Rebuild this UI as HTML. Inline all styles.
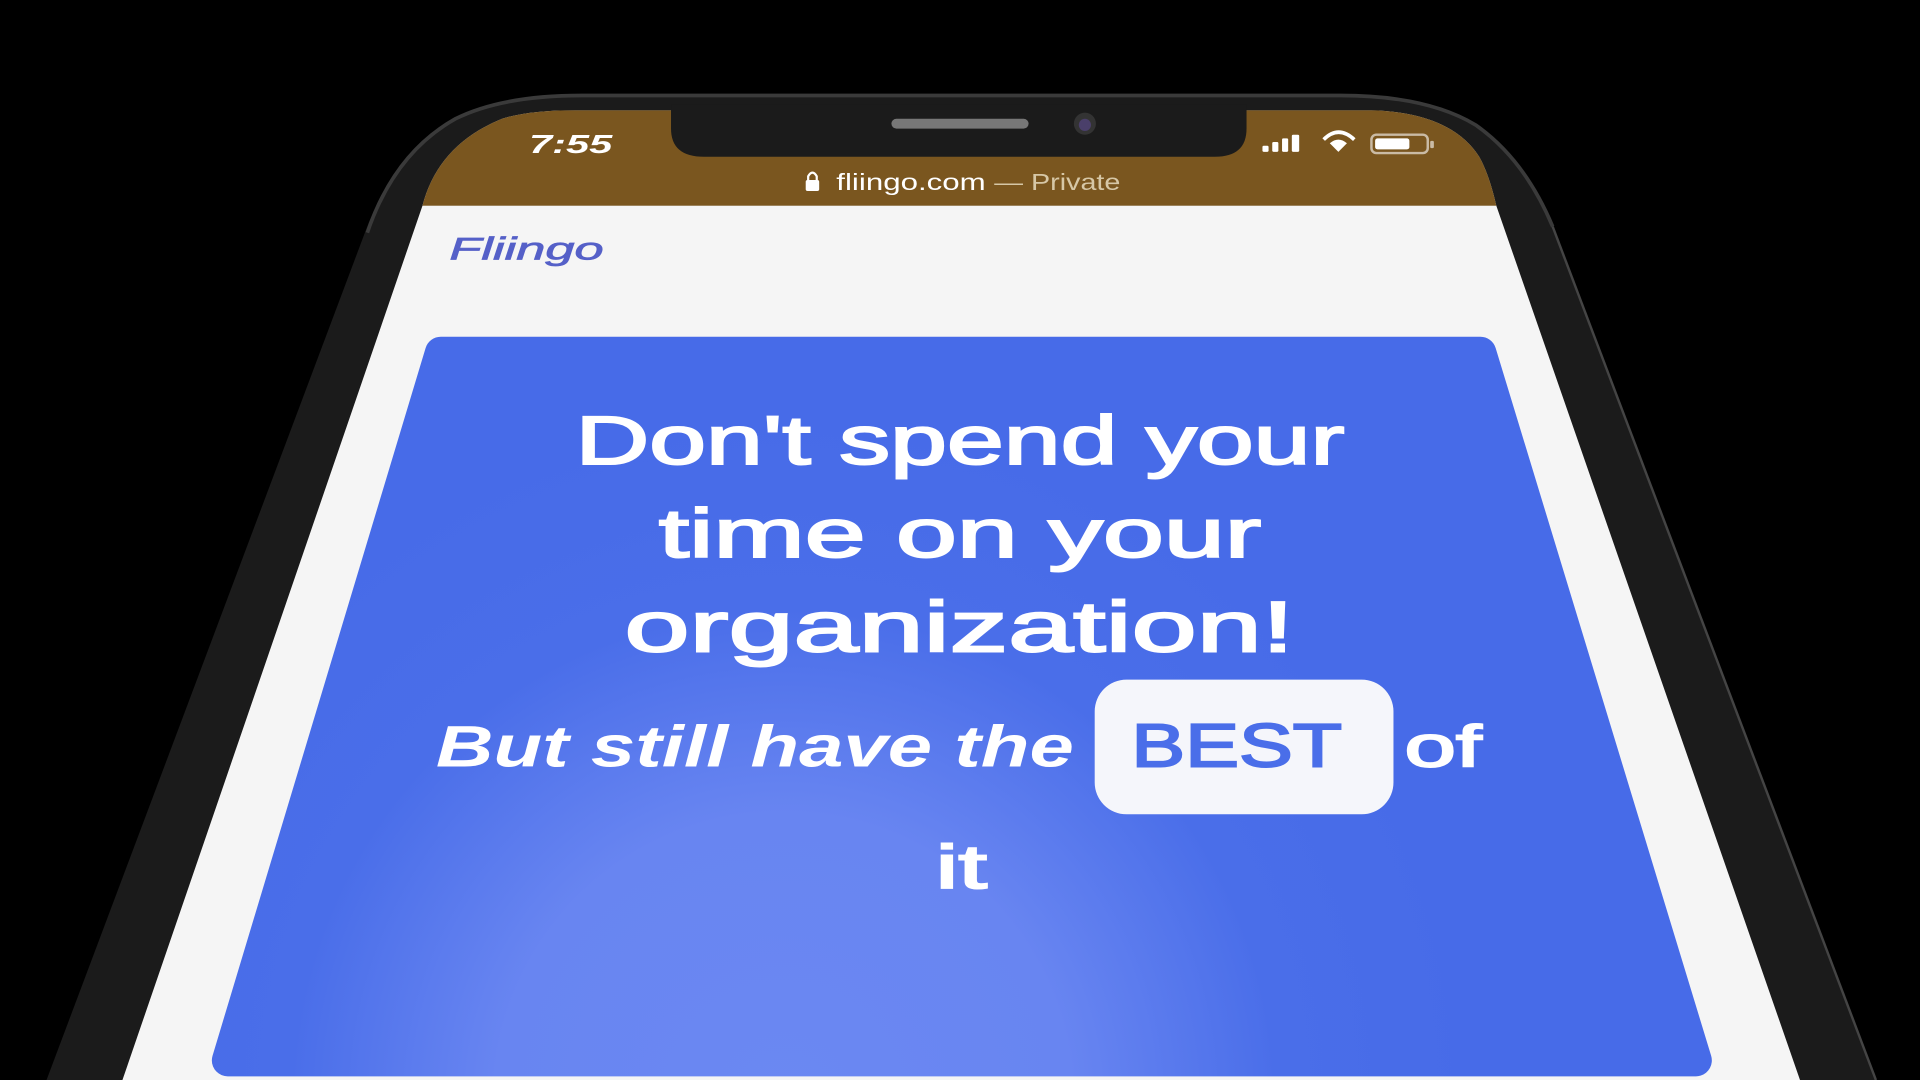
<!DOCTYPE html>
<html><head><meta charset="utf-8"><style>html,body{margin:0;padding:0;background:#000;overflow:hidden}svg{display:block}</style></head>
<body>
<svg width="1920" height="1080" viewBox="0 0 1568 882" xmlns="http://www.w3.org/2000/svg">
<defs>
<radialGradient id="g" cx="640" cy="900" r="560" gradientUnits="userSpaceOnUse">
<stop offset="0" stop-color="#6b88f2"/><stop offset="0.42" stop-color="#6885f1"/><stop offset="0.72" stop-color="#4a6ee9"/><stop offset="1" stop-color="#476be8"/>
</radialGradient>
<clipPath id="scr"><path d="M100,882 L345,168 Q358,118 410,97 Q432,90 470,90 L1120,90 Q1185,92 1208,128 Q1216,142 1222,168 L1470,882 Z"/></clipPath>
</defs>
<rect width="1568" height="882" fill="#000"/>
<path d="M38,882 L298,190 Q322,125 372,97 Q410,78 475,78 L1095,78 Q1165,78 1205,102 Q1245,130 1268,185 L1532,882 Z" fill="#1b1b1b"/>
<path d="M300,190 Q322,125 372,97 Q410,78 475,78 L1095,78 Q1165,78 1205,102 Q1245,130 1268,185" fill="none" stroke="#3a3a3a" stroke-width="3"/>
<path d="M1268,185 L1532,882" stroke="#444" stroke-width="2"/>
<g clip-path="url(#scr)">
<rect x="0" y="0" width="1568" height="882" fill="#f5f5f5"/>
<rect x="0" y="0" width="1568" height="168" fill="#7a561f"/>
</g>
<path d="M548,85 L548,105 Q548,128 575,128 L992,128 Q1018,128 1018,105 L1018,85 Z" fill="#1b1b1b"/>
<rect x="728" y="97" width="112" height="8" rx="4" fill="#777"/>
<circle cx="886" cy="101" r="9" fill="#333"/><circle cx="886" cy="102" r="5" fill="#4a3f6a"/>
<text x="432" y="125" font-family="Liberation Sans, sans-serif" font-size="21" font-weight="bold" font-style="italic" fill="#fff" textLength="68" lengthAdjust="spacingAndGlyphs">7:55</text>
<g fill="#fff">
<rect x="1031" y="119" width="5" height="5" rx="1"/><rect x="1039" y="116" width="5" height="8" rx="1"/><rect x="1047" y="113" width="5" height="11" rx="1"/><rect x="1055" y="110" width="6" height="14" rx="1"/>
<path d="M1093,124 L1086,117 Q1093,111 1100,117 Z"/>
<path d="M1081,114 Q1093,102 1106,114" fill="none" stroke="#fff" stroke-width="3"/>
<rect x="1120" y="110" width="46" height="15" rx="4" fill="none" stroke="#fff" stroke-opacity="0.6" stroke-width="2"/>
<rect x="1123" y="113" width="28" height="9" rx="2"/>
<rect x="1168" y="115" width="3" height="6" rx="1" fill-opacity="0.6"/>
</g>
<rect x="658" y="147" width="11" height="9" rx="1.5" fill="#fff"/><path d="M660,148 V144 Q663.5,138 667,144 V148" fill="none" stroke="#fff" stroke-width="1.8"/>
<text x="683" y="155" font-family="Liberation Sans, sans-serif" font-size="19" fill="#fff" textLength="122" lengthAdjust="spacingAndGlyphs">fliingo.com</text>
<text x="812" y="155" font-family="Liberation Sans, sans-serif" font-size="19" fill="#d6c7a6" textLength="103" lengthAdjust="spacingAndGlyphs">— Private</text>
<text x="367" y="212" font-family="Liberation Sans, sans-serif" font-size="26" font-style="italic" fill="#5560c8" stroke="#5560c8" stroke-width="0.6" textLength="126" lengthAdjust="spacingAndGlyphs">Fliingo</text>
<path d="M360,288 L1209,288 L1385,866 L186,866 Z" fill="url(#g)" stroke="url(#g)" stroke-width="26" stroke-linejoin="round"/>
<g font-family="Liberation Sans, sans-serif" fill="#fff" stroke="#fff" stroke-width="1.6">
<text x="470" y="379" font-size="56" textLength="628" lengthAdjust="spacingAndGlyphs">Don't spend your</text>
<text x="538" y="455" font-size="56" textLength="492" lengthAdjust="spacingAndGlyphs">time on your</text>
<text x="510" y="532" font-size="58" textLength="547" lengthAdjust="spacingAndGlyphs">organization!</text>
<text x="356" y="626" font-size="48" font-style="italic" font-weight="bold" stroke-width="0" textLength="521" lengthAdjust="spacingAndGlyphs">But still have the</text>
<rect x="894" y="555" width="244" height="110" rx="26" fill="#f5f6fb" stroke="none"/>
<text x="924" y="626" font-size="50" fill="#4a6ee9" stroke="#4a6ee9" textLength="172" lengthAdjust="spacingAndGlyphs">BEST</text>
<text x="1147" y="626" font-size="48" textLength="63" lengthAdjust="spacingAndGlyphs">of</text>
<text x="764" y="725" font-size="50" textLength="42" lengthAdjust="spacingAndGlyphs">it</text>
</g>
</svg>
</body></html>
